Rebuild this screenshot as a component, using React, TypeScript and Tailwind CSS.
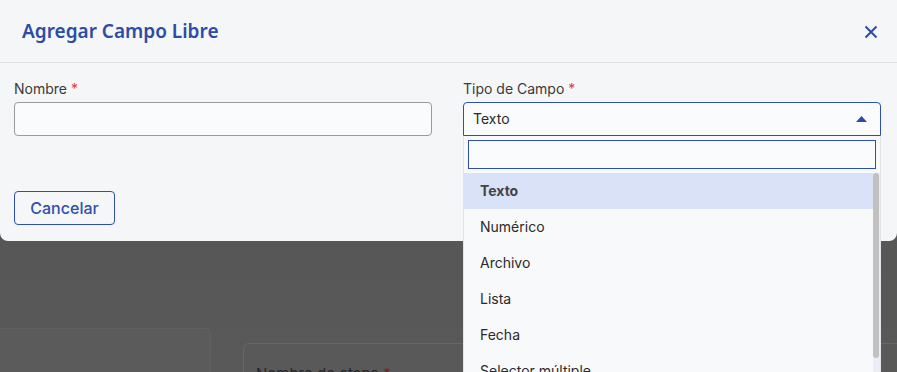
import { useState } from "react";

const tipos = ["Texto", "Numérico", "Archivo", "Lista", "Fecha", "Selector múltiple"];

const App = () => {
  const [selected, setSelected] = useState("Texto");
  return (
    <div
      className="relative h-[372px] w-[897px] overflow-hidden bg-gradient-to-b from-[#525252] to-[#595959]"
      style={{ fontFamily: "Inter, 'Noto Sans', sans-serif" }}
    >
      {/* pagina de fondo bajo el overlay */}
      <div className="flex items-start pt-[328px]">
        <div className="h-[60px] w-[211px] shrink-0 rounded-tr-md border-t border-r border-[#606161] bg-[#5a5b5a]"></div>
        <div className="ml-[32px] mt-[15px] h-[60px] w-[700px] shrink-0 rounded-tl-md border-t border-l border-[#666766] bg-[#595959] pl-[12px] pt-[17px]">
          <span className="text-[15px] text-[#262626]">
            Nombre de etapa <span className="text-[#6e2222]">*</span>
          </span>
        </div>
      </div>

      {/* modal */}
      <div className="absolute left-0 top-0 h-[241px] w-[897px] rounded-b-lg bg-[#f5f6f8]">
        <div className="flex h-[63px] items-center justify-between border-b border-[#dfe0e3] pl-[22px] pr-[19px]">
          <h2
            className="text-[19px] font-semibold text-[#2c4ca6]"
            style={{ fontFamily: "'Noto Sans', sans-serif" }}
          >
            Agregar Campo Libre
          </h2>
          <svg width="14" height="14" viewBox="0 0 14 14" className="mt-[1px]">
            <path d="M1.5 1.5 L12.5 12.5 M12.5 1.5 L1.5 12.5" stroke="#2c4ca6" strokeWidth="2" />
          </svg>
        </div>
        <div className="grid grid-cols-2 gap-x-[31px] pl-[14px] pr-[16px] pt-[16px]">
          <div>
            <label className="block text-sm text-[#3a3a3a]">
              Nombre <span className="text-[#e53935]">*</span>
            </label>
            <div className="mt-[3px] h-[34px] rounded-[4px] border border-[#9a9a9a] bg-[#fafbfc]"></div>
          </div>
          <div>
            <label className="block text-sm text-[#3a3a3a]">
              Tipo de Campo <span className="text-[#e53935]">*</span>
            </label>
            <div className="mt-[3px] flex h-[34px] items-center justify-between rounded-t-[4px] border border-[#2f4fb0] bg-[#fafbfc] pl-[9px] pr-[13px]">
              <span className="text-sm text-[#2a2a2a]">{selected}</span>
              <svg width="11" height="6" viewBox="0 0 11 6">
                <path d="M5.5 0 L11 6 L0 6 Z" fill="#2c4ca6" />
              </svg>
            </div>
          </div>
        </div>
        <div className="px-[14px] pt-[55px]">
          <button className="h-[34px] w-[101px] rounded-[4px] border border-[#2f4fb0] text-base font-medium text-[#2f4fb0]">
            Cancelar
          </button>
        </div>
      </div>

      {/* menu desplegable */}
      <div className="absolute left-[463px] top-[136px] h-[260px] w-[418px] border-x border-[#e2e4e9] bg-[#f8f9fb]">
        <div className="mx-[4px] mt-[4px] h-[29px] border border-[#2f4fb0] bg-[#fafbfd]"></div>
        <div className="mt-[4px] flex">
          <div className="flex-1">
            {tipos.map((t) => (
              <div
                key={t}
                onClick={() => setSelected(t)}
                className={
                  t === selected
                    ? "flex h-[36px] items-center bg-[#dae2f8] pl-[16px] text-sm font-bold text-[#444]"
                    : "flex h-[36px] items-center pl-[16px] text-sm text-[#2a2a2a]"
                }
              >
                {t}
              </div>
            ))}
          </div>
          <div className="w-[7px] bg-[#eceef5]">
            <div className="h-[185px] w-[6px] rounded-full bg-[#c1c1c1]"></div>
          </div>
        </div>
      </div>
    </div>
  );
};

export default App;
